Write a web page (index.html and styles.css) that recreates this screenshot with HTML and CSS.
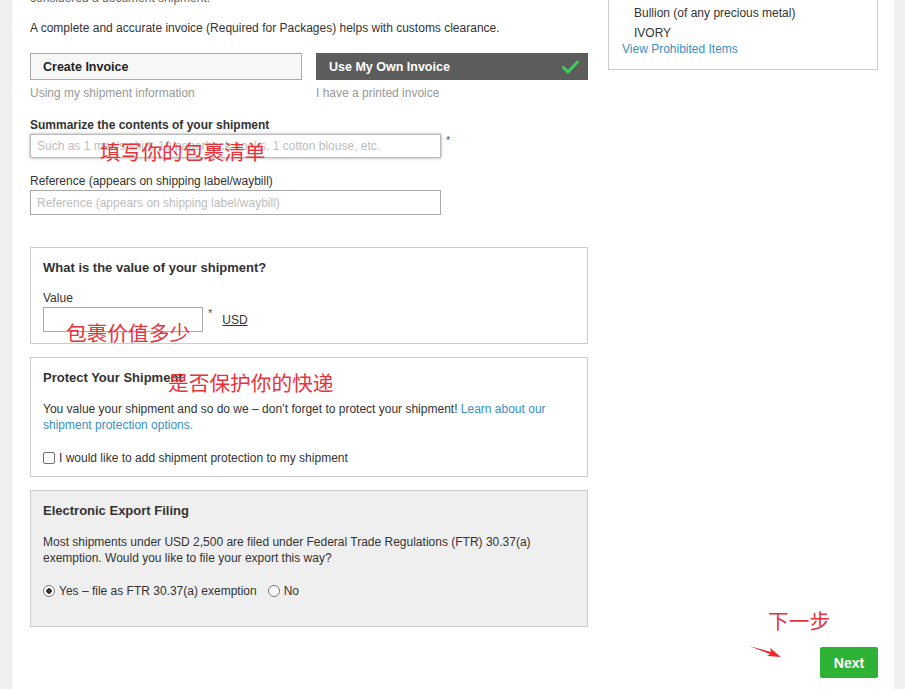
FILE: index.html
```html
<!DOCTYPE html>
<html lang="en">
<head>
    <meta charset="UTF-8">
    <title>Shipment Details</title>
    <link rel="stylesheet" href="styles.css">
</head>
<body>
    <div class="page">
        <div class="columns">
            <div class="main">
                <p class="intro muted-dark">considered a document shipment.</p>
                <p class="intro">A complete and accurate invoice (Required for Packages) helps with customs clearance.</p>

                <div class="invoice-choice">
                    <div class="choice">
                        <button class="choice-btn">Create Invoice</button>
                        <div class="hint">Using my shipment information</div>
                    </div>
                    <div class="choice">
                        <button class="choice-btn selected">
                            Use My Own Invoice
                            <svg class="check" width="17" height="14" viewBox="0 0 17 14"><path d="M1.5 7.5 L6 12 L15.5 2" fill="none" stroke="#3fcf5a" stroke-width="3" stroke-linecap="round" stroke-linejoin="round"/></svg>
                        </button>
                        <div class="hint">I have a printed invoice</div>
                    </div>
                </div>

                <label class="field-label strong">Summarize the contents of your shipment</label>
                <div class="field-row">
                    <input class="text-input focused" type="text" placeholder="Such as 1 men's shirt, 10 paperback books, 1 cotton blouse, etc.">
                    <span class="req">*</span>
                </div>

                <label class="field-label ref-label">Reference (appears on shipping label/waybill)</label>
                <div class="field-row">
                    <input class="text-input" type="text" placeholder="Reference (appears on shipping label/waybill)">
                </div>

                <div class="panel value-panel">
                    <h3>What is the value of your shipment?</h3>
                    <div class="value-label">Value</div>
                    <div class="value-row">
                        <input class="text-input small" type="text">
                        <span class="req">*</span>
                        <a class="currency">USD</a>
                    </div>
                </div>

                <div class="panel protect-panel">
                    <h3>Protect Your Shipment</h3>
                    <p>You value your shipment and so do we – don’t forget to protect your shipment! <a class="link">Learn about our shipment protection options.</a></p>
                    <label class="option"><input type="checkbox"> I would like to add shipment protection to my shipment</label>
                </div>

                <div class="panel export-panel">
                    <h3>Electronic Export Filing</h3>
                    <p>Most shipments under USD 2,500 are filed under Federal Trade Regulations (FTR) 30.37(a) exemption. Would you like to file your export this way?</p>
                    <div class="radios">
                        <label class="option"><input type="radio" name="eef" checked> Yes – file as FTR 30.37(a) exemption</label>
                        <label class="option"><input type="radio" name="eef"> No</label>
                    </div>
                </div>
            </div>

            <div class="side">
                <div class="side-box">
                    <ul class="prohibited">
                        <li>Bullion (of any precious metal)</li>
                        <li>IVORY</li>
                    </ul>
                    <a class="link">View Prohibited Items</a>
                </div>
            </div>
        </div>

        <div class="footer">
            <button class="next-btn">Next</button>
        </div>

        <!-- 红色标注 -->
        <div class="note note-contents">填写你的包裹清单</div>
        <div class="note note-value">包裹价值多少</div>
        <div class="note note-protect">是否保护你的快递</div>
        <div class="note note-next">下一步</div>
        <svg class="note-arrow" width="34" height="14" viewBox="0 0 34 14"><path d="M0 1 L22 7 L21 3 L32 12 L18 11 L21 9 Z" fill="#ee2a2a"/></svg>
    </div>
</body>
</html>
```

FILE: styles.css
```css
html, body {
    margin: 0;
    padding: 0;
    height: 100%;
    overflow: hidden;
}
body {
    background: #f0f0f0;
    font-family: "Liberation Sans", Arial, sans-serif;
    font-size: 12px;
    line-height: 16px;
    color: #333;
}
.page {
    position: relative;
    margin: 0 11px 0 12px;
    background: #fff;
    height: 100%;
    padding: 0 16px 0 18px;
}
.columns {
    display: flex;
    gap: 20px;
    align-items: flex-start;
}
.main {
    width: 558px;
    margin-top: -10px;
}
.intro {
    margin: 0 0 14px;
}
.muted-dark {
    color: #666;
}
.invoice-choice {
    display: flex;
    gap: 14px;
    margin-top: 17px;
}
.choice {
    flex: 1;
}
.choice-btn {
    display: flex;
    align-items: center;
    justify-content: space-between;
    width: 100%;
    height: 27px;
    padding: 0 8px 0 12px;
    border: 1px solid #a9a9a9;
    background: #f7f7f7;
    font-family: inherit;
    font-size: 12.5px;
    font-weight: bold;
    color: #222;
    text-align: left;
    box-sizing: border-box;
}
.choice-btn.selected {
    background: #5c5c5c;
    border-color: #5c5c5c;
    color: #fff;
}
.hint {
    margin-top: 5px;
    color: #999;
}
.field-label {
    display: block;
    margin-top: 16px;
}
.field-label.strong {
    font-weight: bold;
}
.ref-label {
    margin-top: 15px;
}
.field-row {
    display: flex;
    align-items: flex-start;
    margin-top: 1px;
}
.text-input {
    width: 411px;
    height: 25px;
    box-sizing: border-box;
    border: 1px solid #aaa;
    padding: 0 6px;
    font-family: inherit;
    font-size: 12px;
    color: #333;
}
.text-input.focused {
    height: 24px;
    border-color: #bbb;
    box-shadow: 0 0 3px rgba(0, 0, 0, 0.35);
}
.text-input::placeholder {
    color: #bdbdbd;
}
.req {
    margin-left: 5px;
    font-size: 11px;
    color: #555;
    line-height: 12px;
}
.panel {
    border: 1px solid #ccc;
    padding: 12px 12px 0;
    margin-bottom: 13px;
}
.panel h3 {
    margin: 0;
    font-size: 13px;
    line-height: 16px;
    font-weight: bold;
    color: #333;
}
.panel p {
    margin: 0;
}
.value-panel {
    margin-top: 32px;
    height: 83px;
}
.value-label {
    margin-top: 14px;
}
.value-row {
    display: flex;
    align-items: flex-start;
    margin-top: 1px;
}
.text-input.small {
    width: 160px;
}
.currency {
    margin: 5px 0 0 10px;
    text-decoration: underline;
    color: #333;
}
.protect-panel {
    height: 106px;
}
.protect-panel p {
    margin-top: 15px;
}
.option {
    display: inline-flex;
    align-items: center;
    gap: 4px;
}
.protect-panel .option {
    margin-top: 17px;
}
.option input {
    appearance: none;
    margin: 0;
    width: 12px;
    height: 12px;
    border: 1px solid #707070;
    background: #fff;
    box-sizing: border-box;
}
.option input[type="checkbox"] {
    border-radius: 2px;
}
.option input[type="radio"] {
    border-radius: 50%;
    border-color: #777;
}
.option input[type="radio"]:checked {
    background: radial-gradient(circle, #333 0 2.5px, #fff 3px);
}
.export-panel {
    background: #efefef;
    height: 123px;
}
.export-panel p {
    margin-top: 15px;
}
.radios {
    display: flex;
    gap: 11px;
    margin-top: 17px;
}
.link {
    color: #3a8fc3;
}
.side {
    width: 270px;
}
.side-box {
    border: 1px solid #ccc;
    margin-top: -20px;
    padding: 22px 13px 12px;
}
.prohibited {
    list-style: none;
    margin: 0;
    padding-left: 12px;
    line-height: 20px;
}
.side-box .link {
    display: block;
    margin-top: -2px;
}
.footer {
    display: flex;
    justify-content: flex-end;
    width: 848px;
    margin-top: 7px;
}
.next-btn {
    width: 58px;
    height: 31px;
    border: none;
    border-radius: 2px;
    background: #2db236;
    color: #fff;
    font-family: inherit;
    font-size: 14px;
    font-weight: bold;
}
.note {
    position: absolute;
    font-family: "Noto Sans CJK SC", sans-serif;
    font-size: 20.7px;
    line-height: 24px;
    font-weight: 400;
    color: #e8323a;
}
.note-contents {
    left: 88px;
    top: 139px;
}
.note-value {
    left: 54px;
    top: 320px;
}
.note-protect {
    left: 156px;
    top: 370px;
}
.note-next {
    left: 756px;
    top: 608px;
}
.note-arrow {
    position: absolute;
    left: 737px;
    top: 645px;
}
```
